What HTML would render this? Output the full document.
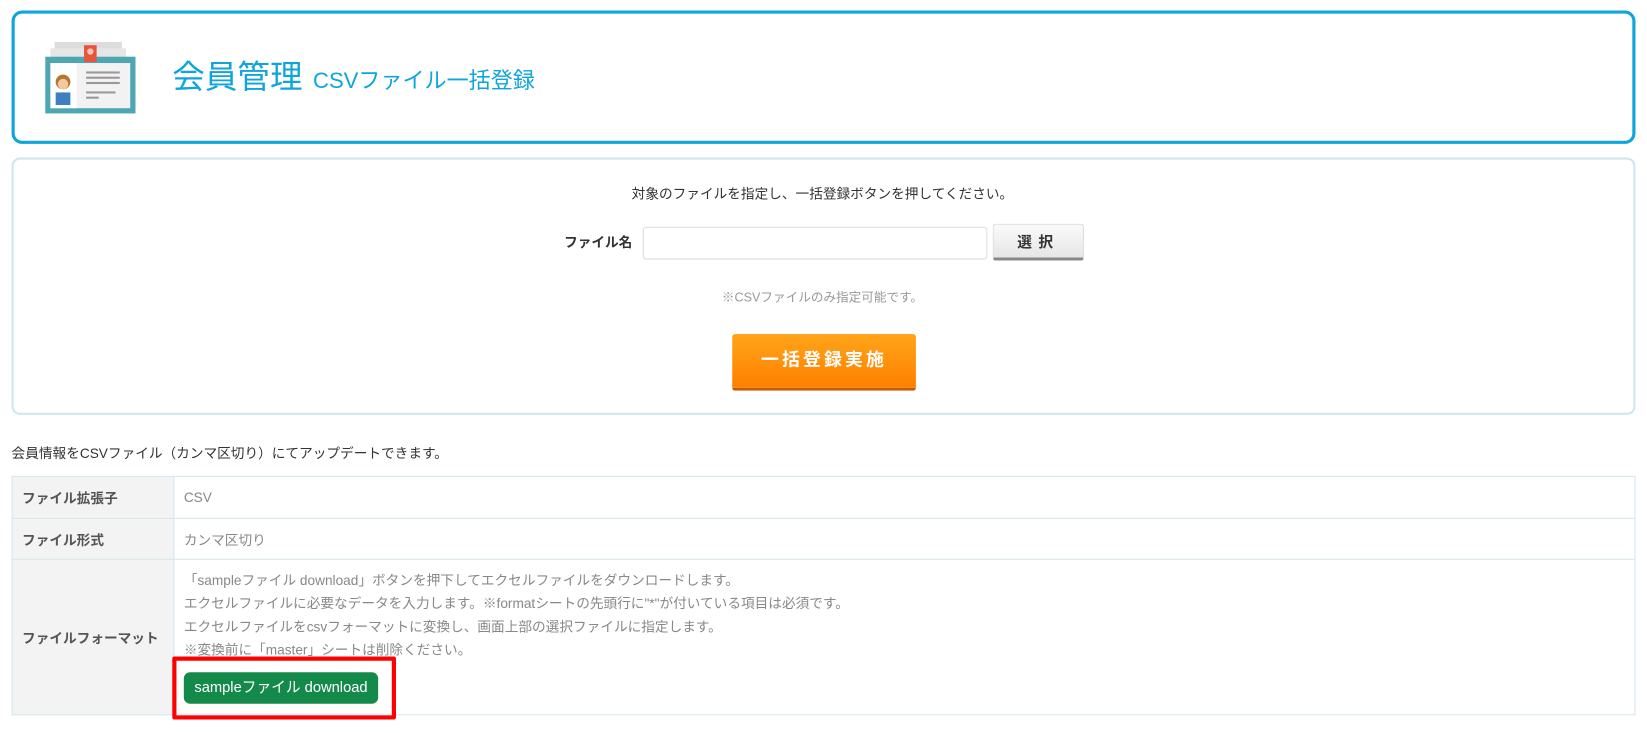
<!DOCTYPE html>
<html><head><meta charset="utf-8"><style>
body{margin:0;background:#fff;font-family:"Liberation Sans","Noto Sans CJK JP",sans-serif;color:#333;width:1647px;height:733px;overflow:hidden;position:relative}
#w{position:absolute;left:0;top:0;width:1568px;height:698px;transform:scale(1.0504);transform-origin:0 0}
.abs{position:absolute}
.hdr{left:11px;top:10px;width:1540px;height:121px;border:3px solid #0ea5dc;border-radius:10px}
.t1{left:164px;top:48px;font-size:31px;color:#0ea5dc;white-space:nowrap}
.t1 small{font-size:21px;margin-left:10px}
.pnl{left:11px;top:150px;width:1542px;height:241px;border:2px solid #cde7ee;border-radius:8px}
.c{font-size:13px}
table{position:absolute;left:11px;top:453px;width:1546px;border-collapse:collapse;font-size:13px}
td{border:1px solid #d6e6ee;padding:0 9px;color:#888}
td.h{background:#f3f3f3;color:#555;font-weight:bold;width:135px}
</style></head><body><div id="w">
<div class="abs hdr"></div>
<svg class="abs" style="left:43px;top:38px" width="86" height="70" viewBox="0 0 86 70">
<rect x="9" y="2" width="64" height="10" fill="#dcdcdc"/>
<rect x="5" y="8" width="72" height="10" fill="#e6e6e6"/>
<rect x="0" y="16" width="86" height="54" fill="#4ea6b3"/>
<rect x="5" y="22" width="76" height="43" fill="#f2f2f2"/>
<rect x="37" y="5" width="12" height="16" fill="#e8553e"/>
<circle cx="43" cy="11" r="3" fill="#f5c5b8"/>
<rect x="5" y="22" width="25" height="43" fill="#fff"/>
<circle cx="17" cy="40" r="7" fill="#b8742c"/>
<circle cx="17" cy="42" r="5" fill="#f3c9a0"/>
<rect x="10" y="50" width="14" height="12" fill="#3f7fc0"/>
<rect x="39" y="30" width="32" height="2" fill="#999"/><rect x="39" y="35" width="32" height="2" fill="#999"/><rect x="39" y="40" width="32" height="2" fill="#999"/><rect x="39" y="49" width="28" height="2" fill="#999"/><rect x="39" y="54" width="12" height="2" fill="#999"/>
</svg>
<div class="abs t1">会員管理<small>CSVファイル一括登録</small></div>
<div class="abs pnl"></div>
<div class="abs c" style="left:0;width:1566px;text-align:center;top:174px">対象のファイルを指定し、一括登録ボタンを押してください。</div>
<div class="abs c" style="left:537px;top:220px;font-weight:bold">ファイル名</div>
<div class="abs" style="left:612px;top:216px;width:326px;height:29px;border:1px solid #ddd;border-radius:3px"></div>
<div class="abs" style="left:945px;top:213px;width:87px;height:35px;border-radius:3px;background:linear-gradient(#fafafa,#e6e6e6);border:1px solid #ddd;border-bottom:3px solid #888;box-sizing:border-box;text-align:center;line-height:32px;font-weight:bold;font-size:14px;letter-spacing:6px">選択</div>
<div class="abs" style="left:0;width:1566px;text-align:center;top:274px;font-size:12px;color:#999">※CSVファイルのみ指定可能です。</div>
<div class="abs" style="left:697px;top:318px;width:175px;height:54px;border-radius:3px;background:linear-gradient(#ffa519,#ff7f00);border-bottom:3px solid #c85a00;box-sizing:border-box;color:#fff;font-weight:bold;font-size:17px;text-align:center;line-height:50px;letter-spacing:3px">一括登録実施</div>
<div class="abs c" style="left:11px;top:421px">会員情報をCSVファイル（カンマ区切り）にてアップデートできます。</div>
<table>
<tr style="height:40px"><td class="h">ファイル拡張子</td><td>CSV</td></tr>
<tr style="height:39px"><td class="h">ファイル形式</td><td>カンマ区切り</td></tr>
<tr style="height:148px"><td class="h">ファイルフォーマット</td><td style="vertical-align:top;padding-top:9px;line-height:22px">「sampleファイル download」ボタンを押下してエクセルファイルをダウンロードします。<br>エクセルファイルに必要なデータを入力します。※formatシートの先頭行に"*"が付いている項目は必須です。<br>エクセルファイルをcsvフォーマットに変換し、画面上部の選択ファイルに指定します。<br>※変換前に「master」シートは削除ください。</td></tr>
</table>
<div class="abs" style="left:164px;top:625px;width:205px;height:52px;border:4px solid #f00;border-radius:2px"></div>
<div class="abs" style="left:175px;top:640px;width:185px;height:30px;background:#148a4a;border-radius:6px;color:#fff;font-size:14px;text-align:center;line-height:29px">sampleファイル download</div>
</div></body></html>
